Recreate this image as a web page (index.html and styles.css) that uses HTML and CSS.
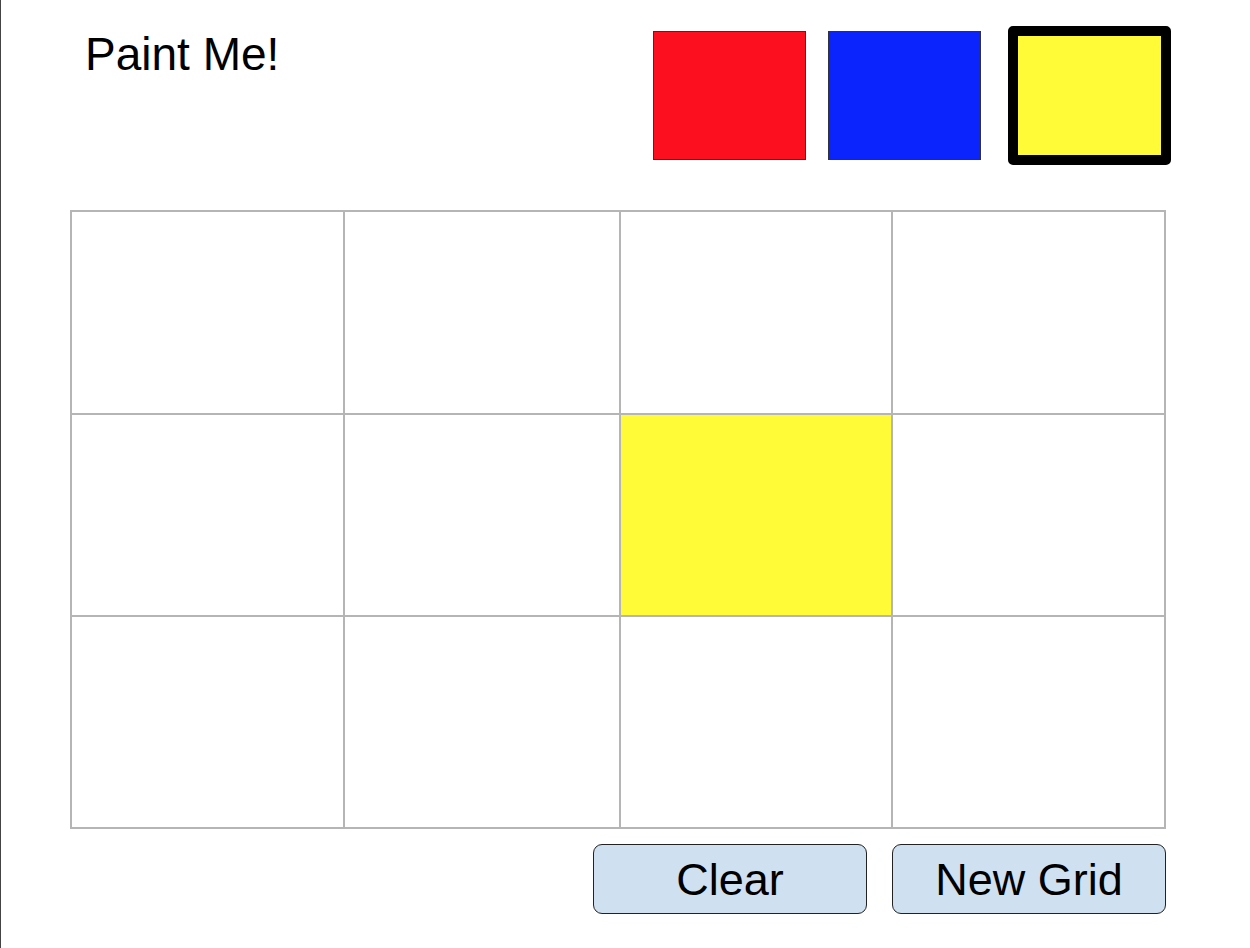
FILE: index.html
```html
<!DOCTYPE html>
<html lang="en">
<head>
<meta charset="utf-8">
<title>Paint Me!</title>
<link rel="stylesheet" href="styles.css">
</head>
<body>
<div class="page">
  <header class="header">
    <h1 class="title">Paint Me!</h1>
    <div class="palette">
      <div class="swatch red"></div>
      <div class="swatch blue"></div>
      <div class="swatch yellow selected"></div>
    </div>
  </header>
  <div class="canvas">
    <div class="cell"></div>
    <div class="cell"></div>
    <div class="cell"></div>
    <div class="cell"></div>
    <div class="cell"></div>
    <div class="cell"></div>
    <div class="cell yellow"></div>
    <div class="cell"></div>
    <div class="cell"></div>
    <div class="cell"></div>
    <div class="cell"></div>
    <div class="cell"></div>
  </div>
  <div class="actions">
    <button class="btn">Clear</button>
    <button class="btn">New Grid</button>
  </div>
</div>
</body>
</html>
```
FILE: styles.css
```css
* { box-sizing: border-box; }
html, body { margin: 0; padding: 0; background: #fff; }
body {
  font-family: "Liberation Sans", Arial, sans-serif;
  color: #000;
  border-left: 1px solid #444;
  height: 948px;
  overflow: hidden;
}
.page {
  padding: 26px 84px 0 69px;
}
.header {
  display: flex;
  justify-content: space-between;
  align-items: flex-start;
  height: 184px;
}
.title {
  margin: 2px 0 0 15px;
  font-size: 46px;
  font-weight: normal;
  line-height: 52px;
}
.palette {
  display: flex;
  align-items: center;
  gap: 22px;
  margin-right: -5px;
}
.swatch {
  width: 153px;
  height: 129px;
  border: 1px solid #333;
}
.swatch.selected {
  width: 163px;
  height: 139px;
  border: 10px solid #000;
  border-radius: 5px;
  margin-left: 5px;
}
.red { background: #fc0f1f; }
.blue { background: #0b23fc; }
.yellow { background: #fffc37; }
.canvas {
  display: grid;
  grid-template-columns: 273px 276px 272px 1fr;
  grid-template-rows: 203px 202px 212px;
  border: 1px solid #b5b5b5;
}
.cell {
  border: 1px solid #b5b5b5;
}
.actions {
  display: flex;
  justify-content: flex-end;
  gap: 25px;
  margin-top: 15px;
}
.btn {
  width: 274px;
  height: 70px;
  font-family: "Liberation Sans", Arial, sans-serif;
  font-size: 45px;
  color: #000;
  background: #cfe0f0;
  border: 1px solid #222;
  border-radius: 9px;
  padding: 0;
  line-height: 1;
}
```
